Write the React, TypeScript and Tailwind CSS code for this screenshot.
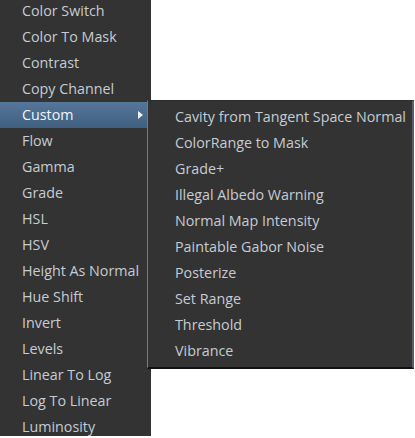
import { Fragment } from 'react'

const mainItems = [
  'Color Switch',
  'Color To Mask',
  'Contrast',
  'Copy Channel',
  'Custom',
  'Flow',
  'Gamma',
  'Grade',
  'HSL',
  'HSV',
  'Height As Normal',
  'Hue Shift',
  'Invert',
  'Levels',
  'Linear To Log',
  'Log To Linear',
  'Luminosity',
]

const customItems = [
  'Cavity from Tangent Space Normal',
  'ColorRange to Mask',
  'Grade+',
  'Illegal Albedo Warning',
  'Normal Map Intensity',
  'Paintable Gabor Noise',
  'Posterize',
  'Set Range',
  'Threshold',
  'Vibrance',
]

const font = { fontFamily: '"Segoe UI", "Open Sans", "Noto Sans", sans-serif' }

export default function App() {
  return (
    <div className="relative w-[415px] h-[438px] overflow-hidden bg-white text-[14.3px]" style={font}>
      {/* Main menu */}
      <div className="w-[151px] h-full bg-[#333333] flex flex-col -mt-[2px]">
        {mainItems.map((label) => {
          const active = label === 'Custom'
          return (
            <Fragment key={label}>
              <div
                className={
                  active
                    ? 'h-[26px] w-[147px] shrink-0 flex items-center justify-between pl-[22px] pr-[3px] bg-gradient-to-b from-[#55779a] to-[#3f5f80] text-[#f2f5f8]'
                    : 'h-[26px] shrink-0 flex items-center pl-[22px] text-[#c5ccd4]'
                }
              >
                <span className="leading-none">{label}</span>
                {active && (
                  <svg width="5" height="8" viewBox="0 0 5 8" className="mr-[1px]">
                    <path d="M0 0 L5 4 L0 8 Z" fill="#f2f5f8" />
                  </svg>
                )}
              </div>
            </Fragment>
          )
        })}
      </div>

      {/* Submenu popup */}
      <div className="absolute left-[147px] top-[100px] w-[267px] bg-[#333333] border-l border-l-[#7a7a7a] border-t border-t-[#2a2a2a] border-r-2 border-r-[#5c5c6e] border-b-2 border-b-[#111111] py-[3px]">
        {customItems.map((label) => (
          <div key={label} className="h-[26px] flex items-center pl-[27px] text-[#c5ccd4] whitespace-nowrap">
            <span className="leading-none">{label}</span>
          </div>
        ))}
      </div>
    </div>
  )
}
